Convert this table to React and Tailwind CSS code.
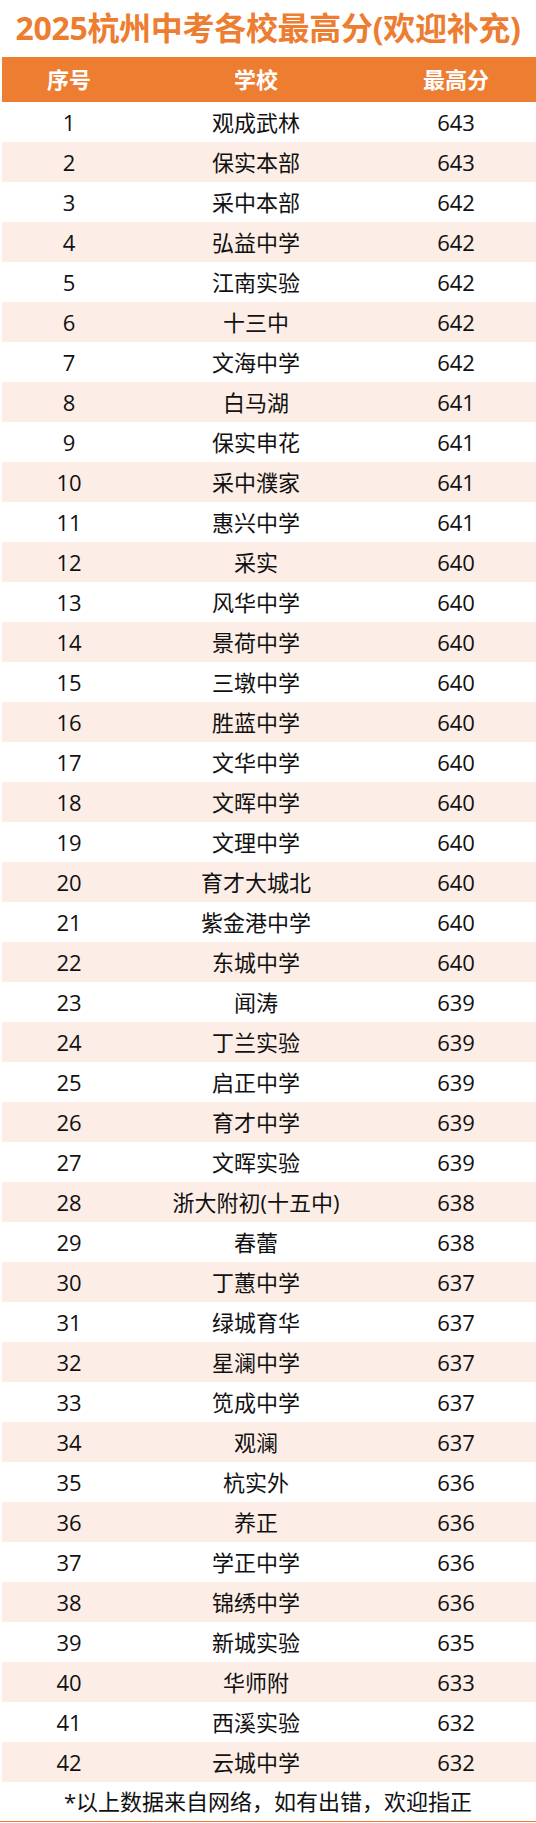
const rows = [
  ['观成武林', 643],
  ['保实本部', 643],
  ['采中本部', 642],
  ['弘益中学', 642],
  ['江南实验', 642],
  ['十三中', 642],
  ['文海中学', 642],
  ['白马湖', 641],
  ['保实申花', 641],
  ['采中濮家', 641],
  ['惠兴中学', 641],
  ['采实', 640],
  ['风华中学', 640],
  ['景荷中学', 640],
  ['三墩中学', 640],
  ['胜蓝中学', 640],
  ['文华中学', 640],
  ['文晖中学', 640],
  ['文理中学', 640],
  ['育才大城北', 640],
  ['紫金港中学', 640],
  ['东城中学', 640],
  ['闻涛', 639],
  ['丁兰实验', 639],
  ['启正中学', 639],
  ['育才中学', 639],
  ['文晖实验', 639],
  ['浙大附初(十五中)', 638],
  ['春蕾', 638],
  ['丁蕙中学', 637],
  ['绿城育华', 637],
  ['星澜中学', 637],
  ['笕成中学', 637],
  ['观澜', 637],
  ['杭实外', 636],
  ['养正', 636],
  ['学正中学', 636],
  ['锦绣中学', 636],
  ['新城实验', 635],
  ['华师附', 633],
  ['西溪实验', 632],
  ['云城中学', 632],
];

const font = { fontFamily: '"Open Sans", "Noto Sans CJK SC", sans-serif' };

export default function App() {
  return (
    <div className="w-[536px] h-[1823px] bg-white" style={font}>
      <h1 className="h-[57px] text-center text-[32px] leading-[55px] font-bold text-[#ED7D31] tracking-[-0.3px]">
        2025杭州中考各校最高分(欢迎补充)
      </h1>
      <div className="ml-[2px] grid grid-cols-[134px_240px_1fr] h-[45px] items-center bg-[#ED7D31] text-white text-[22px] font-bold">
        <div className="text-center">序号</div>
        <div className="text-center">学校</div>
        <div className="text-center">最高分</div>
      </div>
      <div className="ml-[2px]">
        {rows.map(([name, score], i) => (
          <div
            key={i}
            className={`grid grid-cols-[134px_240px_1fr] h-[40px] items-center text-[22px] text-[#111111] ${
              i % 2 === 1 ? 'bg-[#FCEEE6]' : 'bg-white'
            }`}
          >
            <div className="text-center">{i + 1}</div>
            <div className="text-center whitespace-nowrap">{name}</div>
            <div className="text-center">{score}</div>
          </div>
        ))}
      </div>
      <div className="h-[40px] flex items-center justify-center text-[22px] text-[#111111] border-b border-[#ED7D31]">
        *以上数据来自网络，如有出错，欢迎指正
      </div>
    </div>
  );
}
